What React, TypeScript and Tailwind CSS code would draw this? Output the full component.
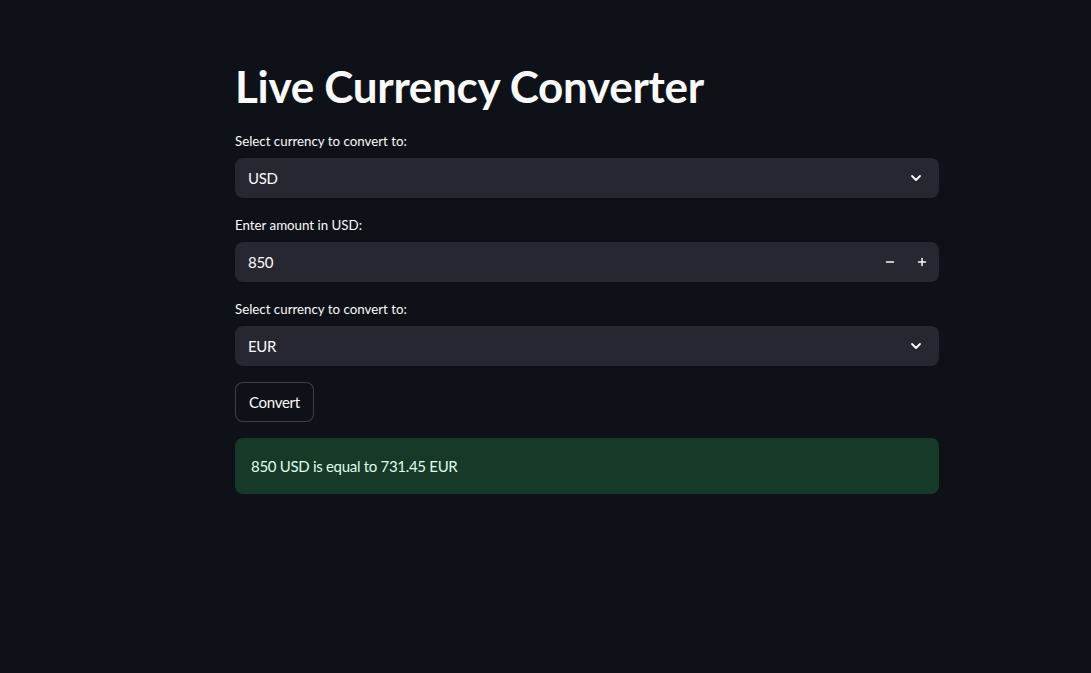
import { ChevronDown, Minus, Plus } from 'lucide-react';

// Streamlit-style dark theme
const font = { fontFamily: 'Lato, "Noto Sans", sans-serif' };

function Label({ children }: { children: string }) {
  return (
    <div className="h-6 flex items-center text-[13.3px] text-[#fafafa] mb-1">{children}</div>
  );
}

function SelectBox({ label, value }: { label: string; value: string }) {
  return (
    <div>
      <Label>{label}</Label>
      <div className="h-10 rounded-lg bg-[#262730] flex items-center justify-between pl-[13px] pr-[15px] text-[15px] tracking-[-0.3px] text-[#fafafa]">
        <span>{value}</span>
        <ChevronDown className="w-4 h-4 text-[#fafafa]" strokeWidth={2.75} />
      </div>
    </div>
  );
}

function NumberBox({ label, value }: { label: string; value: string }) {
  return (
    <div>
      <Label>{label}</Label>
      <div className="h-10 rounded-lg bg-[#262730] flex items-center text-[15px] tracking-[-0.3px] text-[#fafafa]">
        <span className="pl-[13px] flex-1">{value}</span>
        <button className="w-8 h-10 flex items-center justify-center">
          <Minus className="w-3 h-3" strokeWidth={3} />
        </button>
        <button className="w-8 h-10 flex items-center justify-center mr-px">
          <Plus className="w-3 h-3" strokeWidth={3} />
        </button>
      </div>
    </div>
  );
}

export default function App() {
  return (
    <div className="min-h-screen w-full bg-[#0e1117]" style={font}>
      <div className="w-[704px] ml-[235px] pt-[59px] flex flex-col gap-4">
        <h1 className="text-[44px] leading-[55px] font-bold tracking-[-0.3px] text-[#fafafa]">Live Currency Converter</h1>
        <SelectBox label="Select currency to convert to:" value="USD" />
        <NumberBox label="Enter amount in USD:" value="850" />
        <SelectBox label="Select currency to convert to:" value="EUR" />
        <div>
          <button className="h-10 px-[13px] rounded-lg border border-[#fafafa33] bg-[#0e1117] text-[15px] tracking-[-0.3px] text-[#fafafa]">
            Convert
          </button>
        </div>
        <div className="h-14 rounded-lg bg-[#173928] flex items-center px-4 text-[15px] tracking-[-0.3px] text-[#dffde9]">
          850 USD is equal to 731.45 EUR
        </div>
      </div>
    </div>
  );
}
